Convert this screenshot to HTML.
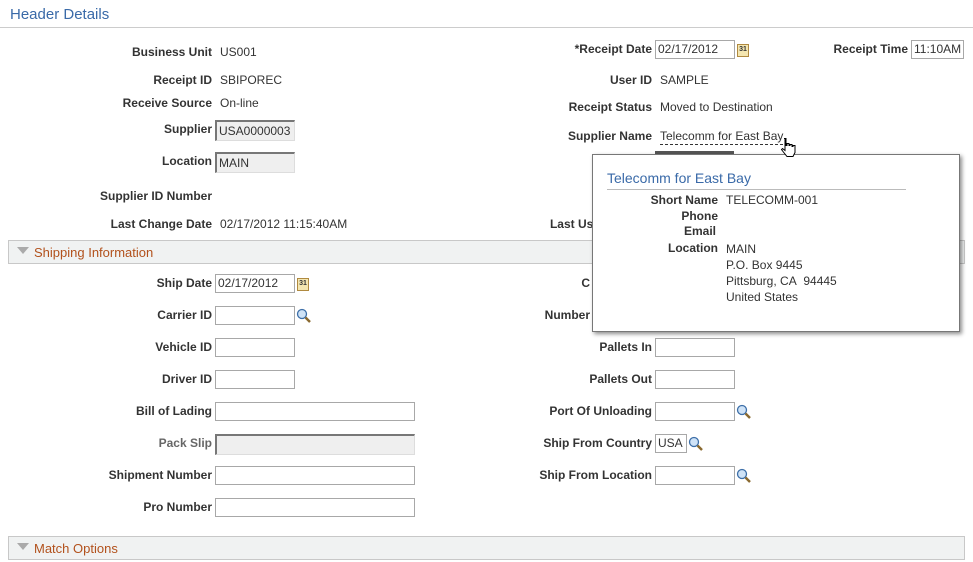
<!DOCTYPE html>
<html><head><meta charset="utf-8"><style>
body{margin:0;width:973px;height:562px;position:relative;background:#fff;font-family:"Liberation Sans",Arial,sans-serif;font-size:12px;color:#333;overflow:hidden}
.a{position:absolute;white-space:nowrap;line-height:14px}
.l{position:absolute;white-space:nowrap;font-weight:bold;color:#333;text-align:right;line-height:14px}
.v{position:absolute;white-space:nowrap;color:#333;line-height:14px}
.i{position:absolute;border:1px solid #a8a8a8;background:#fff;height:17px;box-sizing:border-box;height:19px;font-size:12px;line-height:17px;padding-left:2px;color:#333}
.d{background:#efefef;border-top:2px solid #777;border-left:2px solid #777;border-right:1px solid #ddd;border-bottom:1px solid #ddd;height:21px;line-height:18px}
.bar{position:absolute;left:8px;width:957px;height:24px;background:#f0f2f2;border:1px solid #c8c8c8;box-sizing:border-box}
.bar span{position:absolute;left:25px;top:4px;color:#b2511c;font-size:13px}
.bar i{position:absolute;left:8px;top:6px;width:0;height:0;border-left:6px solid transparent;border-right:6px solid transparent;border-top:7px solid #aaa}
.cal{position:absolute;width:10px;height:11px;border:1px solid #b08a40;background:#f4e6b0;font-size:7px;line-height:10px;text-align:center;font-weight:bold;color:#333}
.srch{position:absolute;width:16px;height:16px}
</style></head><body>
<div class="a" style="left:10px;top:6px;font-size:15px;color:#3a6aa8;line-height:17px">Header Details</div>
<div style="position:absolute;left:0;top:27px;width:973px;height:1px;background:#ccc"></div>

<div class="l" style="right:761px;top:45px">Business Unit</div><div class="v" style="left:220px;top:45px">US001</div>
<div class="l" style="right:761px;top:73px">Receipt ID</div><div class="v" style="left:220px;top:73px">SBIPOREC</div>
<div class="l" style="right:761px;top:96px">Receive Source</div><div class="v" style="left:220px;top:96px">On-line</div>
<div class="l" style="right:761px;top:122px">Supplier</div><div class="i d" style="left:215px;top:120px;width:80px">USA0000003</div>
<div class="l" style="right:761px;top:154px">Location</div><div class="i d" style="left:215px;top:152px;width:80px">MAIN</div>
<div class="l" style="right:761px;top:189px">Supplier ID Number</div>
<div class="l" style="right:761px;top:217px">Last Change Date</div><div class="v" style="left:220px;top:217px">02/17/2012 11:15:40AM</div>

<div class="l" style="right:321px;top:42px">*Receipt Date</div><div class="i" style="left:655px;top:40px;width:80px">02/17/2012</div><div class="cal" style="left:737px;top:44px">31</div>
<div class="l" style="right:65px;top:42px">Receipt Time</div><div class="i" style="left:911px;top:40px;width:53px">11:10AM</div>
<div class="l" style="right:321px;top:73px">User ID</div><div class="v" style="left:660px;top:73px">SAMPLE</div>
<div class="l" style="right:321px;top:100px">Receipt Status</div><div class="v" style="left:660px;top:100px">Moved to Destination</div>
<div class="l" style="right:321px;top:129px">Supplier Name</div><div class="v" style="left:660px;top:129px;border-bottom:1px dashed #333;padding-bottom:1px">Telecomm for East Bay</div>
<div class="l" style="right:373px;top:189px">S</div>
<div class="l" style="right:373px;top:217px">Last Use</div>

<div class="bar" style="top:240px"><i></i><span>Shipping Information</span></div>

<div class="l" style="right:761px;top:276px">Ship Date</div><div class="i" style="left:215px;top:274px;width:80px">02/17/2012</div><div class="cal" style="left:297px;top:278px">31</div>
<div class="l" style="right:761px;top:308px">Carrier ID</div><div class="i" style="left:215px;top:306px;width:80px"></div>
<svg class="srch" style="left:296px;top:308px" viewBox="0 0 16 16"><circle cx="6" cy="6" r="4.5" fill="#cfe3f7" stroke="#3d6fa8" stroke-width="1.3"/><path d="M9.5 9.5L14 14" stroke="#8a6a30" stroke-width="2.5"/></svg>
<div class="l" style="right:761px;top:340px">Vehicle ID</div><div class="i" style="left:215px;top:338px;width:80px"></div>
<div class="l" style="right:761px;top:372px">Driver ID</div><div class="i" style="left:215px;top:370px;width:80px"></div>
<div class="l" style="right:761px;top:404px">Bill of Lading</div><div class="i" style="left:215px;top:402px;width:200px"></div>
<div class="l" style="right:761px;top:436px;color:#666">Pack Slip</div><div class="i d" style="left:215px;top:434px;width:200px"></div>
<div class="l" style="right:761px;top:468px">Shipment Number</div><div class="i" style="left:215px;top:466px;width:200px"></div>
<div class="l" style="right:761px;top:500px">Pro Number</div><div class="i" style="left:215px;top:498px;width:200px"></div>

<div class="l" style="right:383px;top:276px">C</div>
<div class="l" style="right:383px;top:308px">Number</div>
<div class="l" style="right:321px;top:340px">Pallets In</div><div class="i" style="left:655px;top:338px;width:80px"></div>
<div class="l" style="right:321px;top:372px">Pallets Out</div><div class="i" style="left:655px;top:370px;width:80px"></div>
<div class="l" style="right:321px;top:404px">Port Of Unloading</div><div class="i" style="left:655px;top:402px;width:80px"></div>
<svg class="srch" style="left:736px;top:404px" viewBox="0 0 16 16"><circle cx="6" cy="6" r="4.5" fill="#cfe3f7" stroke="#3d6fa8" stroke-width="1.3"/><path d="M9.5 9.5L14 14" stroke="#8a6a30" stroke-width="2.5"/></svg>
<div class="l" style="right:321px;top:436px">Ship From Country</div><div class="i" style="left:655px;top:434px;width:32px">USA</div>
<svg class="srch" style="left:688px;top:436px" viewBox="0 0 16 16"><circle cx="6" cy="6" r="4.5" fill="#cfe3f7" stroke="#3d6fa8" stroke-width="1.3"/><path d="M9.5 9.5L14 14" stroke="#8a6a30" stroke-width="2.5"/></svg>
<div class="l" style="right:321px;top:468px">Ship From Location</div><div class="i" style="left:655px;top:466px;width:80px"></div>
<svg class="srch" style="left:736px;top:468px" viewBox="0 0 16 16"><circle cx="6" cy="6" r="4.5" fill="#cfe3f7" stroke="#3d6fa8" stroke-width="1.3"/><path d="M9.5 9.5L14 14" stroke="#8a6a30" stroke-width="2.5"/></svg>

<div class="bar" style="top:536px"><i></i><span>Match Options</span></div>

<div style="position:absolute;left:655px;top:151px;width:79px;height:3px;background:#555"></div>
<div style="position:absolute;left:592px;top:154px;width:368px;height:178px;background:#fff;border:1px solid #777;box-shadow:2px 2px 4px rgba(0,0,0,.45);box-sizing:border-box">
 <div class="a" style="left:14px;top:15px;font-size:14px;color:#3a6aa8;line-height:17px">Telecomm for East Bay</div>
 <div style="position:absolute;left:14px;top:34px;width:299px;height:1px;background:#bbb"></div>
 <div class="l" style="right:241px;top:38px">Short Name</div><div class="v" style="left:133px;top:38px">TELECOMM-001</div>
 <div class="l" style="right:241px;top:54px">Phone</div>
 <div class="l" style="right:243px;top:69px">Email</div>
 <div class="l" style="right:241px;top:86px">Location</div>
 <div class="v" style="left:133px;top:86px;line-height:16px">MAIN<br>P.O. Box 9445<br>Pittsburg, CA&nbsp; 94445<br>United States</div>
</div>
<svg style="position:absolute;left:780px;top:137px" width="18" height="21" viewBox="0 0 18 21"><path d="M4 1.5h2v7h1v-2h2v2h1v-1h2v2h1v-1h2v7l-2 4H7l-4-5-1.5-2 1-1 2.5 2V1.5z" fill="#fff" stroke="#000" stroke-width="1"/></svg>
</body></html>
